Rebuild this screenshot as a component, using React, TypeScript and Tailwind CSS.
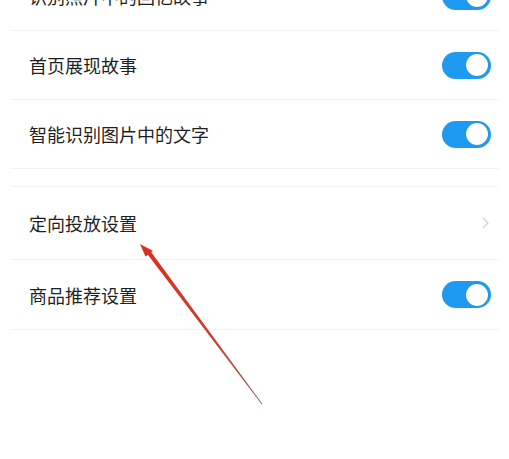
import React from "react";

type Row = { label: string; kind: "toggle" | "link"; h: string };

function Toggle() {
	return (
		<div className="relative h-[27px] w-[49px] rounded-full bg-[#1e9bf0]">
			<div className="absolute right-[3px] top-[2.5px] h-[22px] w-[22px] rounded-full bg-white shadow-[0_0_1px_rgba(0,0,0,0.3)]" />
		</div>
	);
}

function Chevron() {
	return (
		<svg width="9" height="14" viewBox="0 0 9 14" className="mr-[1px]">
			<path d="M2 2 L7 7 L2 12" fill="none" stroke="#d2d2d2" strokeWidth="1.3" />
		</svg>
	);
}

function SettingRow({ row }: { row: Row }) {
	return (
		<div className={`mx-[10px] flex items-center justify-between border-b border-[#f3f3f3] pl-[19px] pr-[8px] ${row.h}`}>
			<span className="text-[18px] leading-none text-[#1f1f1f]">{row.label}</span>
			{row.kind === "toggle" ? <Toggle /> : <Chevron />}
		</div>
	);
}

const groupA: Row[] = [
	{ label: "识别照片中的回忆故事", kind: "toggle", h: "h-[69px]" },
	{ label: "首页展现故事", kind: "toggle", h: "h-[69px]" },
	{ label: "智能识别图片中的文字", kind: "toggle", h: "h-[69px]" },
];

const groupB: Row[] = [
	{ label: "定向投放设置", kind: "link", h: "h-[73px]" },
	{ label: "商品推荐设置", kind: "toggle", h: "h-[70px]" },
];

export default function App() {
	return (
		<div
			className="relative h-[459px] w-[509px] overflow-hidden bg-white"
			style={{ fontFamily: '"Noto Sans CJK SC", "Noto Sans", sans-serif' }}
		>
			<div className="-mt-[38px]">
				{groupA.map((r) => (
					<SettingRow key={r.label} row={r} />
				))}
				<div className="mx-[10px] h-[18px] border-b border-[#f3f3f3]" />
				{groupB.map((r) => (
					<SettingRow key={r.label} row={r} />
				))}
			</div>

			{/* red annotation arrow */}
			<svg className="pointer-events-none absolute left-0 top-0" width="509" height="459" viewBox="0 0 509 459">
				<defs>
					<linearGradient id="arrowFade" x1="140" y1="245" x2="262" y2="404" gradientUnits="userSpaceOnUse">
						<stop offset="0" stopColor="#d8301e" />
						<stop offset="0.6" stopColor="#c8402e" />
						<stop offset="1" stopColor="#8a6a66" />
					</linearGradient>
				</defs>
				<polygon points="146.5,253 150,250.5 262.5,404 261.8,404.4" fill="url(#arrowFade)" />
				<polygon points="140,244 153,251 145.5,256.5" fill="#d8301e" />
			</svg>
		</div>
	);
}
